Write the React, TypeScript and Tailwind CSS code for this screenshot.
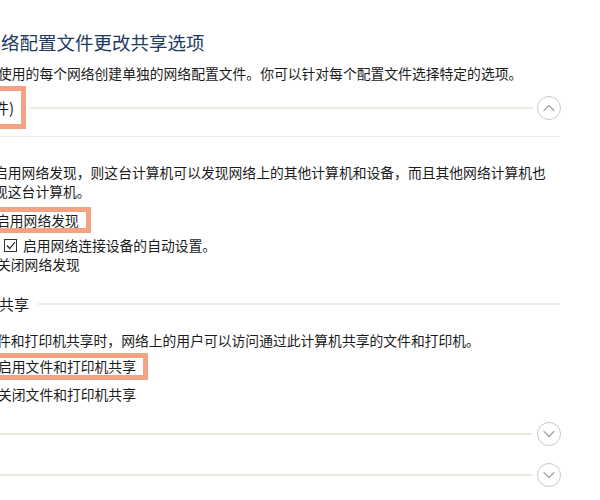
const font = { fontFamily: '"Noto Sans CJK SC", "Noto Sans", sans-serif' };

const Chevron = ({ up }: { up?: boolean }) => (
    <div className="w-[24px] h-[24px] shrink-0 rounded-full border border-[#cdc9c1] flex items-center justify-center bg-white">
        <svg width="12" height="8" viewBox="0 0 12 8" fill="none">
            <path
                d={up ? 'M1 6.5 L6 1.5 L11 6.5' : 'M1 1.5 L6 6.5 L11 1.5'}
                stroke="#a8a49c"
                strokeWidth="1.3"
                strokeLinecap="round"
                strokeLinejoin="round"
            />
        </svg>
    </div>
);

const Mark = ({ children, className }: { children: React.ReactNode; className: string }) => (
    <div className={`self-start border-[5px] border-[#f3a283] bg-white pl-[1px] pr-[7px] flex items-center ${className}`}>
        {children}
    </div>
);

export default function App() {
    return (
        <div className="w-[600px] h-[500px] overflow-hidden bg-white text-[#1b1b1b]" style={font}>
            <div className="w-[561px] flex flex-col pt-[29px]">
                <h1 className="h-[26px] leading-[26px] text-[18.5px] text-[#1e3a5f] ml-[1px] whitespace-nowrap">
                    络配置文件更改共享选项
                </h1>
                <p className="mt-[8px] h-[20px] leading-[20px] text-[13.8px] -ml-[2px] whitespace-nowrap">
                    使用的每个网络创建单独的网络配置文件。你可以针对每个配置文件选择特定的选项。
                </p>

                <div className="mt-[3px] h-[43px] flex items-center">
                    <Mark className="-ml-[12px] h-[43px]">
                        <span className="text-[15px] leading-[20px] whitespace-nowrap">件)</span>
                    </Mark>
                    <div className="ml-[4px] flex-1 h-[2px] bg-[#eeebe0]" />
                    <div className="ml-[4px]">
                        <Chevron up />
                    </div>
                </div>
                <div className="mt-[7px] h-px w-[560px] bg-[#efede5]" />

                <div className="mt-[26px] text-[13.8px] leading-[19px] -ml-[6px] whitespace-nowrap">
                    <p>启用网络发现，则这台计算机可以发现网络上的其他计算机和设备，而且其他网络计算机也</p>
                    <p>现这台计算机。</p>
                </div>

                <Mark className="mt-[6px] -ml-[10px] h-[26px]">
                    <span className="text-[13.8px] leading-[16px] whitespace-nowrap">启用网络发现</span>
                </Mark>
                <div className="mt-[2px] h-[20px] flex items-center gap-[6px] ml-[4px]">
                    <div className="w-[13px] h-[13px] border border-[#333] flex items-center justify-center">
                        <svg width="10" height="9" viewBox="0 0 10 9" fill="none">
                            <path d="M1 4.5 L3.8 7.5 L9 1" stroke="#222" strokeWidth="1.2" />
                        </svg>
                    </div>
                    <span className="text-[13.8px] leading-[20px] whitespace-nowrap">启用网络连接设备的自动设置。</span>
                </div>
                <p className="h-[18px] leading-[18px] text-[13.8px] -ml-[3px] whitespace-nowrap">关闭网络发现</p>

                <div className="mt-[21px] h-[20px] flex items-center">
                    <span className="text-[15px] leading-[20px] -ml-[1px] whitespace-nowrap">共享</span>
                    <div className="ml-[9px] w-[522px] h-[2px] bg-[#eeebe0]" />
                </div>

                <p className="mt-[17px] h-[19px] leading-[19px] text-[13.8px] -ml-[3px] whitespace-nowrap">
                    件和打印机共享时，网络上的用户可以访问通过此计算机共享的文件和打印机。
                </p>
                <Mark className="mt-[3px] -ml-[8px] h-[27px]">
                    <span className="text-[13.8px] leading-[17px] whitespace-nowrap">启用文件和打印机共享</span>
                </Mark>
                <p className="mt-[5px] h-[18px] leading-[18px] text-[13.8px] -ml-[2px] whitespace-nowrap">
                    关闭文件和打印机共享
                </p>

                <div className="mt-[10px] h-[41px] flex items-center">
                    <div className="flex-1 h-[2px] bg-[#ebe8dd]" />
                    <div className="ml-[5px]">
                        <Chevron />
                    </div>
                </div>
                <div className="h-[41px] flex items-center">
                    <div className="flex-1 h-[2px] bg-[#ebe8dd]" />
                    <div className="ml-[5px]">
                        <Chevron />
                    </div>
                </div>
            </div>
        </div>
    );
}
